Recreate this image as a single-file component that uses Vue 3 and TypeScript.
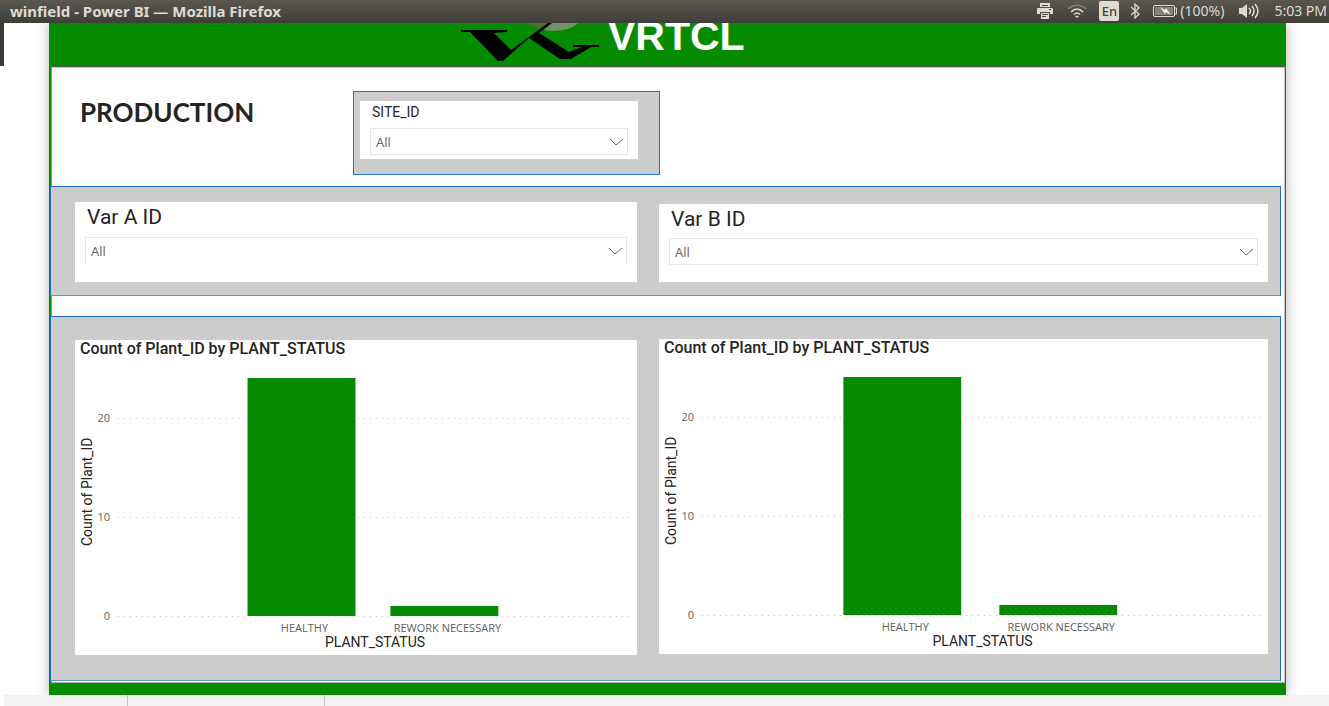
<script setup lang="ts">
import { ref } from 'vue'

interface Status {
  label: string
  count: number
}

interface Chart {
  id: string
  statuses: Status[]
}

const siteId = ref('All')
const varA = ref('All')
const varB = ref('All')

const charts: Chart[] = [
  { id: 'a', statuses: [{ label: 'HEALTHY', count: 24 }, { label: 'REWORK NECESSARY', count: 1 }] },
  { id: 'b', statuses: [{ label: 'HEALTHY', count: 24 }, { label: 'REWORK NECESSARY', count: 1 }] },
]

const ticks = [20, 10, 0]
const baseline = 256
const maxCount = 24
const maxBar = 238
const barStart = 25.2
const barWidth = 21
const barStep = 27.8

const barHeight = (count: number) => Math.round((count / maxCount) * maxBar)
const barX = (index: number) => barStart + index * barStep
</script>

<template>
  <div class="screen">
    <header class="topbar">
      <span class="window-title">winfield - Power BI — Mozilla Firefox</span>
      <div class="tray">
        <button type="button" class="tray-item printer" aria-label="Printer">
          <svg width="16" height="16" viewBox="0 0 16 16">
            <path d="M3 0h10v4H3z" fill="#dfdbd2" />
            <path d="M5 2h6v1H5z" fill="#4a4841" />
            <path d="M1 5h14a1 1 0 0 1 1 1v5h-3V9H3v2H0V6a1 1 0 0 1 1-1z" fill="#dfdbd2" />
            <path d="M12 6h2v1h-2z" fill="#4a4841" />
            <path d="M4 10h8v6H4z" fill="#dfdbd2" />
            <path d="M5 11h6v1H5zM5 13h4v1H5z" fill="#4a4841" />
          </svg>
        </button>
        <button type="button" class="tray-item wifi" aria-label="Wireless network">
          <svg width="20" height="14" viewBox="0 0 20 14" fill="none" stroke-width="1.6">
            <path d="M1 5c5-5 13-5 18 0" stroke="#858279" />
            <path d="M4 8c4-4 8-4 12 0" stroke="#dfdbd2" />
            <path d="M7 10.500c2-2 4-2 6 0" stroke="#dfdbd2" />
            <path d="M8 12.500l2-1 2 1-2 1.500z" fill="#dfdbd2" stroke="none" />
          </svg>
        </button>
        <button type="button" class="tray-item language">En</button>
        <button type="button" class="tray-item bluetooth" aria-label="Bluetooth">
          <svg width="10" height="16" viewBox="0 0 10 16" fill="none" stroke="#dfdbd2" stroke-width="1.3">
            <path d="M1 4l8 7-4 4V1l4 4-8 7" />
          </svg>
        </button>
        <button type="button" class="tray-item battery">
          <svg width="24" height="12" viewBox="0 0 24 12">
            <rect x=".5" y=".5" width="21" height="11" rx="1.5" fill="none" stroke="#dfdbd2" />
            <rect x="2" y="2" width="18" height="8" fill="#85827a" />
            <path d="M22 3h1.500v6H22" fill="none" stroke="#dfdbd2" />
            <path d="M7 2l5 3 1-2 5 7-5-3-1 2z" fill="#f2efe8" />
          </svg>
          <span>(100%)</span>
        </button>
        <button type="button" class="tray-item volume" aria-label="Volume">
          <svg width="21" height="16" viewBox="0 0 21 16" fill="none" stroke="#dfdbd2" stroke-width="1.5">
            <path d="M0 5h3l5-4v14l-5-4H0z" fill="#dfdbd2" stroke="none" />
            <path d="M10 5q3 3 0 6M13 3q4 5 0 10M16 1q6 7 0 14" />
          </svg>
        </button>
        <button type="button" class="tray-item clock">5:03 PM</button>
      </div>
    </header>

    <div class="launcher-edge"></div>

    <main class="report">
      <div class="brand">
        <svg class="logo" width="292" height="43" viewBox="0 0 292 43" role="img" aria-label="VRTCL">
          <path d="M74 0h48q-8 8-26 8-12 0-22-8z" fill="#6f9360" />
          <path d="M72 0h20l-8 6q-7-2-12-6z" fill="#4d6f33" />
          <path
            d="M5 7h46v2l-13 1 17 17L92 0h4L83 10l30 19 13-5h-9v-2h26v2h-8l-20 12h-11L73 15 47 38h-5L14 9H5z"
            fill="#000"
          />
          <text x="152" y="27" class="logo-text">VRTCL</text>
        </svg>
      </div>

      <div class="page">
        <section class="intro">
          <h1>PRODUCTION</h1>
          <div class="site-panel">
            <div class="slicer slicer-site">
              <label for="site">SITE_ID</label>
              <div class="select-box">
                <select id="site" v-model="siteId"><option>All</option></select>
                <svg class="chevron" width="13" height="8" viewBox="0 0 13 8"><path d="M0 1l6 6 7-6" /></svg>
              </div>
            </div>
          </div>
        </section>

        <section class="band filters">
          <div class="slicer slicer-a">
            <label for="var-a">Var A ID</label>
            <div class="select-box">
              <select id="var-a" v-model="varA"><option>All</option></select>
              <svg class="chevron" width="13" height="8" viewBox="0 0 13 8"><path d="M0 1l6 6 7-6" /></svg>
            </div>
          </div>
          <div class="slicer slicer-b">
            <label for="var-b">Var B ID</label>
            <div class="select-box">
              <select id="var-b" v-model="varB"><option>All</option></select>
              <svg class="chevron" width="13" height="8" viewBox="0 0 13 8"><path d="M0 1l6 6 7-6" /></svg>
            </div>
          </div>
        </section>

        <section class="band charts">
          <article v-for="chart in charts" :key="chart.id" class="chart" :class="'chart-' + chart.id">
            <h2>Count of Plant_ID by PLANT_STATUS</h2>
            <div class="chart-body">
              <span class="y-title">Count of Plant_ID</span>
              <svg class="plot" width="100%" height="274">
                <g v-for="tick in ticks" :key="tick">
                  <line
                    x1="0"
                    x2="100%"
                    :y1="baseline - barHeight(tick) + 0.5"
                    :y2="baseline - barHeight(tick) + 0.5"
                    class="grid-line"
                  />
                  <text x="-8" :y="baseline - barHeight(tick) + 4" text-anchor="end" class="tick">{{ tick }}</text>
                </g>
                <g v-for="(status, i) in chart.statuses" :key="status.label">
                  <rect
                    :x="barX(i) + '%'"
                    :y="baseline - barHeight(status.count)"
                    :width="barWidth + '%'"
                    :height="barHeight(status.count)"
                    class="bar"
                  />
                  <text :x="barX(i) + barWidth / 2 + '%'" dx="3" y="272" text-anchor="middle" class="tick">
                    {{ status.label }}
                  </text>
                </g>
              </svg>
            </div>
            <p class="x-title">PLANT_STATUS</p>
          </article>
        </section>
      </div>
    </main>

    <footer class="page-tabs">
      <span class="tab tab-nav"></span>
      <span class="tab tab-page"></span>
    </footer>
  </div>
</template>

<style>
body {
  margin: 0;
  background: #fff;
}
</style>

<style scoped>
.screen {
  position: relative;
  display: flex;
  flex-direction: column;
  min-height: 100vh;
  overflow: hidden;
  color: #252423;
  font-family: Roboto, "Liberation Sans", sans-serif;
}

.topbar {
  position: relative;
  z-index: 1;
  display: flex;
  align-items: center;
  justify-content: space-between;
  box-sizing: border-box;
  height: 23px;
  padding: 0 2px 2px 10px;
  background: linear-gradient(#59574f, #403e39);
  color: #dfdbd2;
  font: 14px/20px "Noto Sans", "Open Sans", sans-serif;
}

.window-title {
  font-size: 15px;
  font-weight: 700;
}

.tray {
  display: flex;
  align-items: center;
}

.tray-item {
  display: flex;
  align-items: center;
  gap: 3px;
  padding: 0;
  border: 0;
  background: none;
  color: inherit;
  font: inherit;
}

.printer {
  margin-right: 14px;
}

.wifi {
  margin-right: 12px;
}

.language {
  justify-content: center;
  width: 20px;
  height: 20px;
  margin-right: 11px;
  border-radius: 2px;
  background: #dfdbd2;
  color: #45433d;
  font-size: 13px;
  font-weight: 500;
}

.bluetooth {
  margin-right: 13px;
}

.battery {
  margin-right: 15px;
}

.volume {
  margin-right: 14px;
}

.launcher-edge {
  position: absolute;
  top: 23px;
  left: 0;
  width: 4px;
  height: 43px;
  background: #3c3a35;
}

.report {
  flex: 1;
  margin: 0 43px 0 49px;
  padding: 0 0 11px 2px;
  background: #058b00;
  box-shadow: 0 0 12px rgba(0, 0, 0, 0.3);
}

.brand {
  display: flex;
  height: 43px;
  overflow: hidden;
}

.brand::before {
  width: 405px;
  max-width: 33%;
  flex: none;
  content: "";
}

.logo {
  display: block;
  flex: none;
}

.logo-text {
  fill: #fff;
  font: 700 41px "Liberation Sans", Arial, sans-serif;
}

.page {
  padding-bottom: 2px;
  border: 1px solid #555;
  border-left-color: #8a9a88;
  background: #fff;
  box-shadow: inset -1px 1px #c4c4c4, inset 0 -1px #b0b0b0;
}

.intro {
  display: flex;
  align-items: flex-start;
  height: 119px;
}

h1 {
  width: 273px;
  margin: 28px 0 0 28px;
  font: 700 26px/34px Lato, sans-serif;
}

.site-panel {
  box-sizing: border-box;
  width: 307px;
  height: 84px;
  margin-top: 24px;
  padding: 9px 21px 15px 6px;
  border: 1px solid #2272b9;
  background: #ccc;
}

.slicer {
  box-sizing: border-box;
  padding: 2px 10px 0;
  background: #fff;
}

.slicer label {
  display: block;
  margin: 0 2px 6px;
  font-size: 21px;
  line-height: 26px;
}

.slicer-site {
  height: 58px;
}

.slicer-site label {
  margin-bottom: 7px;
  font-size: 14px;
  line-height: 18px;
}

.slicer-a {
  height: 80px;
}

.slicer-a label {
  margin-bottom: 7px;
}

.slicer-b {
  height: 78px;
}

.select-box {
  position: relative;
}

select {
  display: block;
  box-sizing: border-box;
  width: 100%;
  height: 27px;
  padding: 0 24px 0 5px;
  border: 1px solid #e6e6e6;
  border-radius: 0;
  background: #fff;
  color: #605e5c;
  font: 13px "Open Sans", "Noto Sans", sans-serif;
  appearance: none;
}

.slicer-a select {
  border-bottom-color: transparent;
}

.chevron {
  position: absolute;
  top: 10px;
  right: 5px;
  fill: none;
  stroke: #666;
  pointer-events: none;
}

.band {
  display: grid;
  grid-template-columns: 562fr 609fr;
  column-gap: 22px;
  box-sizing: border-box;
  margin: 0 4px 20px -2px;
  padding: 0 12px 0 24px;
  border: 1px solid #1a6fbd;
  border-bottom-color: #5f96c8;
  background: #ccc;
}

.filters {
  align-items: end;
  height: 110px;
  padding-bottom: 13px;
}

.charts {
  align-items: start;
  height: 365px;
  margin-bottom: 0;
  padding-top: 22px;
}

.chart {
  height: 315px;
  background: #fff;
}

.chart-a {
  margin-top: 1px;
}

h2 {
  margin: 0;
  padding: 0 0 2px 5px;
  font-size: 16px;
  font-weight: 500;
  line-height: 18px;
}

.chart-body {
  display: flex;
  align-items: flex-start;
  padding-right: 5px;
}

.y-title {
  flex: none;
  box-sizing: border-box;
  width: 43px;
  height: 264px;
  padding: 0 4px 0 23px;
  font-size: 14px;
  line-height: 16px;
  text-align: center;
  writing-mode: vertical-rl;
  transform: rotate(180deg);
}

.plot {
  display: block;
  flex: 1;
  min-width: 0;
  overflow: visible;
}

.grid-line {
  stroke: #c8c6c4;
  stroke-dasharray: 1 5;
}

.bar {
  fill: #058b00;
}

.tick {
  fill: #605e5c;
  font: 11px "Open Sans", "Noto Sans", sans-serif;
}

.x-title {
  margin: 0 5px 0 43px;
  font-size: 14px;
  line-height: 16px;
  text-align: center;
}

.page-tabs {
  position: relative;
  display: flex;
  height: 11px;
  margin-left: 4px;
  background: #f3f2f1;
}

.tab {
  border-right: 1px solid #c8c6c4;
}

.tab-nav {
  width: 123px;
}

.tab-page {
  width: 196px;
}
</style>
